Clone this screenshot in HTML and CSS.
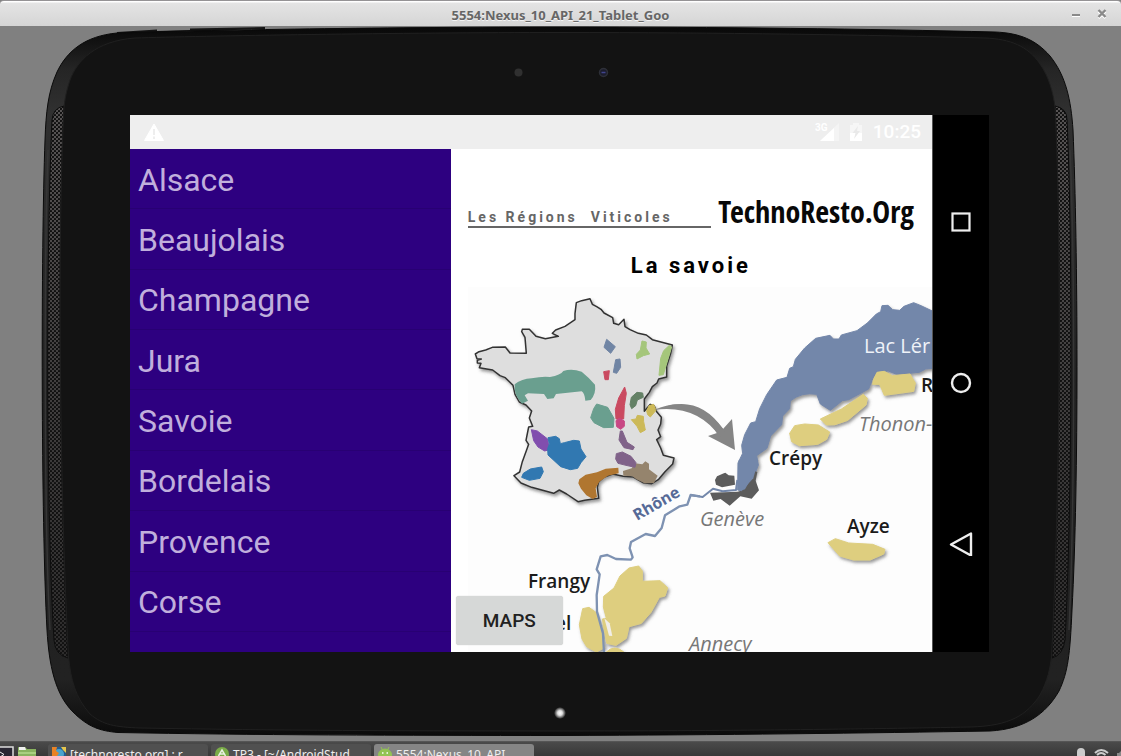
FILE: index.html
```html
<!DOCTYPE html>
<html lang="fr">
<head>
<meta charset="utf-8">
<title>5554:Nexus_10_API_21_Tablet_Goo</title>
<link rel="stylesheet" href="styles.css">
</head>
<body>
<header class="titlebar">
  <h1 class="titlebar-text">5554:Nexus_10_API_21_Tablet_Goo</h1>
  <div class="titlebar-buttons">
    <button type="button" aria-label="Minimize"><svg width="10" height="10" viewBox="0 0 10 10"><path d="M1 7H9" stroke="#fff" stroke-width="2"/><path d="M1 6H9" stroke="#8a8a8a" stroke-width="2"/></svg></button>
    <button type="button" aria-label="Close"><svg width="10" height="10" viewBox="0 0 10 10"><path d="M1.500 2.500L8.500 9M8.500 2.500L1.500 9" stroke="#fff" stroke-width="2.400"/><path d="M1.500 1L8.500 8M8.500 1L1.500 8" stroke="#8a8a8a" stroke-width="2.400"/></svg></button>
  </div>
</header>

<main class="stage">
  <svg class="skin" viewBox="0 26 1121 715" preserveAspectRatio="none" aria-hidden="true">
    <defs>
      <pattern id="mesh" width="4" height="4" patternUnits="userSpaceOnUse"><rect width="4" height="4" fill="#575454"/><circle cx="1" cy="1" r="1.100" fill="#0a0a0a"/><circle cx="3" cy="3" r="1.100" fill="#0a0a0a"/></pattern>
      <linearGradient id="rim" x1="0" y1="0" x2="0" y2="1"><stop offset="0" stop-color="#080808"/><stop offset=".06" stop-color="#252525"/><stop offset=".12" stop-color="#303030"/><stop offset=".5" stop-color="#202020"/><stop offset=".92" stop-color="#222"/><stop offset="1" stop-color="#0b0b0b"/></linearGradient>
      <linearGradient id="meshShade" x1="0" y1="0" x2="0" y2="1"><stop offset="0" stop-color="#111" stop-opacity="0"/><stop offset="1" stop-color="#111" stop-opacity=".6"/></linearGradient>
      <radialGradient id="led"><stop offset="0" stop-color="#fff"/><stop offset=".4" stop-color="#ddd"/><stop offset="1" stop-color="#131313"/></radialGradient>
    </defs>
    <path d="M117 34V32L157 29.500V31L190 30V28.500L265 27V29Z" fill="#151515"/>
    <path d="M560 27C400 27 200 30 117 33C85 36 67 51 57 72C48 92 46 112 45 140C41 250 41 520 47 630C49 665 55 694 73 712C88 727 100 731 118 732.500C250 735 400 735.500 560 735.500C720 735 870 733 990 731C1025 729 1046 714 1059 691C1068 672 1070 655 1072 610C1079 480 1078 250 1073 130C1071 100 1066 76 1050 56C1036 40 1020 33 995 32C870 29 720 27 560 27Z" fill="url(#rim)" stroke="#0a0a0a"/>
    <path d="M48 150C44 260 44 520 50 630M1070 150C1075 260 1075 500 1069 630" fill="none" stroke="#363636" stroke-width="1.500"/>
    <path d="M64 106Q53 108 52 120C46 250 46 510 54 640Q55 655 68 658C60 500 57 240 64 106Z" fill="url(#mesh)" stroke="#0b0b0b"/>
    <path d="M64 106Q53 108 52 120C46 250 46 510 54 640Q55 655 68 658C60 500 57 240 64 106Z" fill="url(#meshShade)"/>
    <path d="M1055 106Q1067 108 1067 120C1073 250 1072 510 1065 640Q1063 655 1052 658C1060 500 1062 240 1055 106Z" fill="url(#mesh)" stroke="#0b0b0b"/>
    <path d="M1055 106Q1067 108 1067 120C1073 250 1072 510 1065 640Q1063 655 1052 658C1060 500 1062 240 1055 106Z" fill="url(#meshShade)"/>
    <path d="M560 32.500C400 32.500 200 36 135 38C95 41 77 61 70 80C66 92 65 99 64 107C57 240 60 500 68.500 657C71 680 75 697 90 714C103 725 115 727 140 728C280 730.500 400 731 560 731C720 731 870 729 970 727C1010 726 1027 715 1040 695C1048 680 1050 668 1051.500 657C1060 500 1062 240 1055 107C1053 92 1049 77 1040 64C1028 46 1010 39 985 38C870 35 720 32.500 560 32.500Z" fill="#131313" stroke="#202020"/>
    <circle cx="518.500" cy="72.500" r="4" fill="#303030"/>
    <circle cx="603.500" cy="72.500" r="4" fill="#1b1c2d" stroke="#2e3038" stroke-width="1.500"/>
    <path d="M601.500 72.500H605.500" stroke="#41458e" stroke-width="1.500"/>
    <circle cx="560" cy="713" r="6" fill="url(#led)"/>
  </svg>

  <div class="screen">
    <div class="app">
      <div class="statusbar">
        <svg class="warn" width="20" height="18" viewBox="0 0 20 18"><path d="M10 1L19.500 17.500H.5Z" fill="#fff" stroke="#fff" stroke-linejoin="round"/><path d="M10 6V12M10 13.500V16" stroke="#eee" stroke-width="2"/></svg>
        <div class="status-right">
          <svg width="24" height="20" viewBox="0 0 24 20"><path d="M24 1V19H5Z" fill="#f4f4f4"/><path d="M19 6V19H5Z" fill="#fff"/><text x="0" y="9" class="net">3G</text></svg>
          <svg width="14" height="20" viewBox="0 0 14 20"><path d="M1 3H4V1H10V3H13V19H1Z" fill="#f6f6f6"/><path d="M1 11H13V19H1Z" fill="#fff"/><path d="M9 4L3.500 11H6.500L5 17L11 9H8Z" fill="#e9e9e9"/></svg>
          <time>10:25</time>
        </div>
      </div>
      <div class="panes">
        <ul class="regions">
          <li>Alsace</li><li>Beaujolais</li><li>Champagne</li><li>Jura</li><li>Savoie</li><li>Bordelais</li><li>Provence</li><li>Corse</li><li>Bourgogne</li>
        </ul>
        <section class="detail">
          <div class="masthead">
            <p class="tagline">Les Régions&nbsp; Viticoles</p>
            <p class="logo">TechnoResto.Org</p>
          </div>
          <h2 class="region-title">La savoie</h2>
          <svg class="map" viewBox="468 287 465 365" preserveAspectRatio="xMinYMin slice" role="img" aria-label="Carte des vignobles de Savoie">
            <defs><filter id="sh" x="-20%" y="-20%" width="150%" height="160%"><feDropShadow dx="5" dy="7" stdDeviation="5" flood-color="#555" flood-opacity=".6"/></filter></defs>
            <rect x="468" y="287" width="465" height="365" fill="#fdfdfd"/>
            <g class="areas" transform="translate(460 285) scale(.333333)">
              <path filter="url(#sh)" d="M349 53L365 47L390 41L397 58L410 65L423 73L432 84L458 98L461 115L476 119L492 103L495 125L510 134L535 145L559 150L577 164L637 180L632 205L620 243L620 276L596 282L591 294L577 305L568 322L553 342V379L571 358L583 363L590 380L604 397L602 417L594 435L602 455L590 464L602 489L610 511L642 519L638 537L615 560L596 583L575 596L549 593L520 576L490 574L458 567L431 577L416 590L412 607L416 640L374 646L354 650L320 627L298 615L281 625L215 607L183 594L162 572L179 561L187 530L199 497L206 478L198 466L206 426L218 424L208 399L215 378L198 360L178 351L165 328L159 301L136 278L120 272L98 255L58 248L63 235L52 234V226L64 222L51 221L46 207L57 200L77 195L97 187L136 186L150 204L199 205L195 157L185 140L187 133H208L228 154L256 161L295 154L277 145L287 135L315 124L345 104L345 86Z" fill="#dedede" stroke="#333" stroke-width="4.500" stroke-linejoin="round"/>
              <path d="M164 298Q185 282 215 280Q248 273 270 276Q302 270 310 258Q335 249 365 260Q384 275 405 299Q409 325 392 345L376 347Q374 325 365 319L288 327L281 340L262 342L252 327L204 325L194 331L204 347L186 356Q161 331 164 298Z" fill="#6a9f8f"/>
              <path d="M410 357L443 367L462 400L460 427L431 428L402 413L392 398L401 371Z" fill="#6a9f8f" stroke="#6a9f8f"/>
              <path d="M214 434L232 438L263 462L268 494L254 498L234 486L221 467Z" fill="#814eae" stroke="#814eae"/>
              <path d="M264 458L287 454L298 461L301 476L313 473L341 466L358 468L363 492L378 515L363 533L353 550L331 554L302 545L264 510L263 491L268 477Z" fill="#3178b1" stroke="#3178b1"/>
              <path d="M190 565L211 552L245 546L250 560L240 580L208 586L185 577Z" fill="#3178b1" stroke="#3178b1"/>
              <path d="M358 583L377 569L411 562L437 551L475 548L476 565L444 572L418 590L407 610L411 636L398 642L379 631L363 611L355 595Z" fill="#b07630"/>
              <path d="M489 558L515 550L525 535L547 538L556 529L567 536L567 553L593 572L582 594L554 595L529 583L517 574L490 572Z" fill="#95846d"/>
              <path d="M469 506L487 501L513 514L528 533L525 547L498 541L474 535L467 522ZM481 438H487L501 472L523 486L519 494L492 488L477 465Z" fill="#806289" stroke="#806289"/>
              <path d="M494 306L499 325L493 362L491 402L468 402L466 373L476 339Z" fill="#ca4a60" stroke="#ca4a60"/><path d="M468 407L478 400L493 408V424L482 433L470 425Z" fill="#c84784" stroke="#c84784"/>
              <path d="M431 260L448 257L445 284H435Z" fill="#ca4a60" stroke="#ca4a60"/>
              <path d="M514 337L531 322L548 324L550 337L532 345L527 362L515 371L510 359Z" fill="#648166" stroke="#648166"/>
              <path d="M440 163L466 185L452 205L432 187ZM467 224L480 222L482 247L470 265L460 262Z" fill="#7085a4" stroke="#7085a4"/>
              <path d="M546 168L559 171L558 189L569 207L550 212L531 222L529 208L541 195ZM628 181L635 186L610 269L597 271L602 220L611 197Z" fill="#a5c67b" stroke="#a5c67b"/>
              <path d="M514 404L528 402L532 391L550 394L551 410L556 435L541 443L531 424ZM560 378L567 362L581 358L588 376L571 396L563 389Z" fill="#ccb958" stroke="#ccb958"/>
            </g>
            <path d="M640 422L667 406Q701 397 723 429L732 419L735 450L708 436L717 433Q698 403 667 406L640 422Z" fill="#858585"/>
            <path d="M654 410Q694 392 725 431L720 437Q697 404 654 410Z" fill="#858585"/>
            <g class="areas" transform="translate(690 290) scale(.333333)">
              <path d="M143 600L144 519L158 490L155 466L164 434L182 399L197 395L209 356L230 314L260 270L291 262L299 235L310 230L316 208L344 174L377 145L420 136L430 147H447L454 135L501 122L532 99L559 72L572 65L576 47L594 46L608 59L629 61L642 49L671 38L693 47L729 64V235L707 237L688 247L620 253L595 243L566 244L550 261L536 297L476 329L457 332L421 361L391 342L380 313Q335 305 301 333L299 356L278 378L275 404L242 438L231 475L200 497L205 525L190 565L165 600Z" fill="#7387aa" stroke="#7387aa" filter="url(#sh)"/>
              <g fill="#dece7f" stroke="#dece7f" filter="url(#sh)"><path d="M299 430L314 407L344 402L385 405L419 426L410 448L383 463L328 467L305 455Z"/><path d="M391 387L454 357L520 313L532 325L528 345L473 391L435 404L409 405Z"/><path d="M550 270L561 247L583 244L607 257L660 252L676 279L671 304L583 316L569 283L548 283Z"/></g>
              <path d="M75 570L81 559L98 551L106 548L116 556L133 557L135 584L96 592L78 584Z" fill="#5c5c5c"/>
            </g>
            <g class="areas" transform="translate(690 460) scale(.333333)">
              <path d="M60 98L144 95L165 88L196 34L202 36L197 62L207 91L185 116L151 109L119 137L92 117L70 122Z" fill="#5c5c5c"/>
              <path d="M142 60L138 90L98 94L69 86L38 111L0 105" fill="none" stroke="#7387aa" stroke-width="6"/>
              <path d="M146 0H205L190 55L154 94L144 91Z" fill="#7387aa"/>
              <path d="M414 248L436 236L476 249L548 253L585 268L581 282L540 300L491 300L449 288Z" fill="#dece7f" stroke="#dece7f" filter="url(#sh)"/>
            </g>
            <g class="areas" transform="translate(450 470) scale(.333333)">
              <g fill="#dece7f" stroke="#dece7f" filter="url(#sh)"><path d="M461 379L492 354L510 318L537 294L566 288L577 303L577 334L630 332L653 353L645 378L628 382L603 427L574 460L537 470L529 505L498 526L470 520L457 447L469 445L460 411Z"/><path d="M398 416L417 412L439 428L456 470L464 533L439 546L410 530L396 507L388 464Z"/><path d="M467 548Q493 520 524 548Z"/></g>
              <path d="M463 445L479 460L487 498L477 497Z" fill="#f1eee8"/>
              <path d="M750 79L722 75L712 104L689 109L645 136L635 174L615 198L587 192L543 216L539 235L548 262L543 269L498 267L472 255L452 259L440 298L449 313L440 375L441 425L459 490L462 548" fill="none" stroke="#7e92b2" stroke-width="7"/>
            </g>
            <g class="town"><text x="769" y="465">Crépy</text><text x="847" y="533">Ayze</text><text x="528" y="588">Frangy</text><text x="921" y="392">R</text><text x="555" y="630">el</text></g>
            <g class="city"><text x="700" y="526">Genève</text><text x="689" y="651">Annecy</text><text x="859" y="431">Thonon-</text></g>
            <text class="lake" x="864" y="353">Lac Lér</text>
            <text class="river" transform="translate(637 521) rotate(-30)">Rhône</text>
          </svg>
          <button type="button" class="maps">MAPS</button>
        </section>
      </div>
    </div>
    <nav class="navbar" aria-label="Navigation">
      <button type="button" aria-label="Récents"><svg width="24" height="24" viewBox="0 0 24 24"><rect x="3.500" y="3.500" width="17" height="17" fill="none" stroke="#eee" stroke-width="2.200"/></svg></button>
      <button type="button" aria-label="Accueil"><svg width="24" height="24" viewBox="0 0 24 24"><circle cx="12" cy="12" r="9" fill="none" stroke="#eee" stroke-width="2.400"/></svg></button>
      <button type="button" aria-label="Retour"><svg width="24" height="24" viewBox="0 0 24 24"><path d="M2 12.500L22 1.500V23.500Z" fill="none" stroke="#eee" stroke-width="2.400" stroke-linejoin="round"/></svg></button>
    </nav>
  </div>
</main>

<footer class="taskbar">
  <svg class="launcher" width="37" height="14" viewBox="0 0 37 14"><rect x="-5" y="3" width="18" height="16" fill="#2a2733" stroke="#ddd" stroke-width="1.500"/><path d="M0 8L4 10.500L0 13M6 13H10" fill="none" stroke="#eee"/><path d="M18 4Q18 3 19 3H25L27 5H36V14H18Z" fill="#89b35f"/><path d="M19 3H25L26 6H19Z" fill="#f0f0f0"/><path d="M18 9H36" stroke="#a9cf80" stroke-width="2"/></svg>
  <div class="tasks">
    <button type="button" class="task"><svg width="14" height="14" viewBox="0 0 14 14"><rect width="14" height="14" fill="#255c91"/><circle cx="7" cy="7" r="5" fill="#4aa3cd"/><path d="M0 0H5L4 4L7 6L5 9L9 11V14H0Z" fill="#e98225"/><path d="M9 0H14V6L11 3Z" fill="#e6c64d"/></svg><span>[technoresto.org] : r</span></button>
    <button type="button" class="task"><svg width="14" height="14" viewBox="0 0 14 14"><circle cx="7" cy="7" r="7" fill="#7aac48"/><path d="M3.500 9L7 3L10.500 9M5 7H9" fill="none" stroke="#e8f0e0" stroke-width="1.500"/></svg><span>TP3 - [~/AndroidStud</span></button>
    <button type="button" class="task active"><svg width="14" height="14" viewBox="0 0 14 14"><path d="M0 9A7 7 0 0 1 14 9V14H0ZM3 0L5 4M11 0L9 4" fill="#92c353" stroke="#92c353"/><path d="M4 6H5.500M8.500 6H10" stroke="#fff" stroke-width="1.500"/></svg><span>5554:Nexus_10_API_</span></button>
  </div>
  <svg class="tray" width="46" height="14" viewBox="0 0 46 14"><rect x="2" y="6" width="8" height="12" rx="4" fill="#ccc"/><path d="M20 11Q26 5 33 11M22 13Q26 9 30.500 13" fill="none" stroke="#ccc" stroke-width="2"/><path d="M42 11H44L46 9V14H42Z" fill="#888"/></svg>
</footer>
</body>
</html>
```
FILE: styles.css
```css
* { box-sizing: border-box; margin: 0; padding: 0; }
button { border: 0; background: none; font: inherit; color: inherit; }
svg { display: block; }
body {
  display: flex; flex-direction: column; height: 100vh; overflow: hidden;
  background: #808080; font-family: Roboto, "Open Sans", sans-serif;
}

.titlebar {
  display: grid; grid-template-columns: 1fr auto 1fr; align-items: center;
  flex: none; height: 26px; padding: 0 14px;
  border-top: 1px solid #959395; border-radius: 4px 4px 0 0;
  background: linear-gradient(#fff 0 1px, #e4e4e4 2px, #d5d5d5);
}
.titlebar-text {
  grid-column: 2; padding-top: 2px; color: #666; text-shadow: 0 1px #f5f5f5;
  font: bold 13px/20px "Noto Sans", "Open Sans", sans-serif;
}
.titlebar-buttons { display: flex; justify-content: flex-end; gap: 16px; }

.stage { position: relative; flex: 1; min-height: 0; display: flex; padding: 89px 132px 89px 130px; }
.skin { position: absolute; inset: 0; width: 100%; height: 100%; }
.screen { position: relative; flex: 1; min-width: 0; display: flex; background: #000; }
.app { flex: 1; min-width: 0; display: flex; flex-direction: column; background: #fff; }

.statusbar {
  display: flex; align-items: center; justify-content: space-between;
  flex: none; height: 34px; padding: 0 11px 0 14px; background: #eee; color: #fff;
}
.status-right { display: flex; align-items: center; gap: 10px; font-size: 19px; font-weight: 500; line-height: 34px; }
.net { font: bold 10px Roboto, sans-serif; fill: #fff; }

.panes { flex: 1; min-height: 0; display: grid; grid-template-columns: 2fr 3fr; grid-template-rows: 100%; }
.regions {
  display: grid; grid-auto-rows: 12%; overflow: hidden; list-style: none;
  background: #2d0080; color: #c0afdc; font-size: 32px;
}
.regions li { display: flex; align-items: center; padding: 2px 8px 0; border-bottom: 1px solid #280073; }

.detail { position: relative; min-width: 0; display: flex; flex-direction: column; overflow: hidden; padding: 30px 0 0 17px; }
.masthead { display: flex; align-items: flex-end; gap: 7px; height: 66px; padding: 0 18px 0 0; }
.tagline {
  flex: 1; margin-bottom: 17px; border-bottom: 2px solid #666; white-space: nowrap;
  color: #666; font-size: 14px; font-weight: bold; line-height: 18px; letter-spacing: 3px;
}
.logo { color: #080808; font: 30px/66px "Open Sans Condensed", "Roboto Condensed", "Liberation Sans Narrow", "DejaVu Sans Condensed", sans-serif; }
.region-title { padding: 9px 18px 9px 0; text-align: center; font-size: 22px; line-height: 24px; letter-spacing: 3px; }
.map { flex: 1; min-height: 0; width: 100%; }
.areas { stroke-width: 3; stroke-linejoin: round; }
.town { font: 600 19px "Open Sans", sans-serif; fill: #1b1b1b; }
.city { font: italic 20px "Open Sans", sans-serif; fill: #777; }
.lake { font: 20px "Open Sans", sans-serif; fill: #eef2f8; }
.river { font: bold 16px "Open Sans", sans-serif; fill: #566a97; }
.maps {
  position: absolute; left: 5px; bottom: 7px; padding: 13px 27px;
  border-radius: 3px; background: #d6d8d7; color: #212121;
  box-shadow: 0 0 1px #bbb; font-size: 19px; font-weight: 500; line-height: 23px;
}

.navbar { flex: none; width: 57px; padding: 26px 0 28px; display: flex; flex-direction: column; align-items: center; border-left: 1px solid #555; }
.navbar button { flex: 1; display: flex; align-items: center; }

.taskbar {
  display: flex; align-items: flex-start; flex: none; height: 15px; overflow: hidden;
  border-top: 1px solid #555; background: linear-gradient(#4a4a4a, #383838);
}
.launcher { flex: none; margin-top: 2px; }
.tasks { display: flex; gap: 3px; flex: 1; padding: 2px 0 0 11px; }
.task {
  display: flex; align-items: flex-start; gap: 4px; flex: none; width: 160px; height: 26px;
  padding: 3px 4px 0; border-radius: 3px; background: #505050; color: #eee; overflow: hidden;
  font: 12px/16px "Noto Sans", "Open Sans", sans-serif; white-space: nowrap;
}
.task.active { background: #858585; }
.tray { flex: none; }
```
